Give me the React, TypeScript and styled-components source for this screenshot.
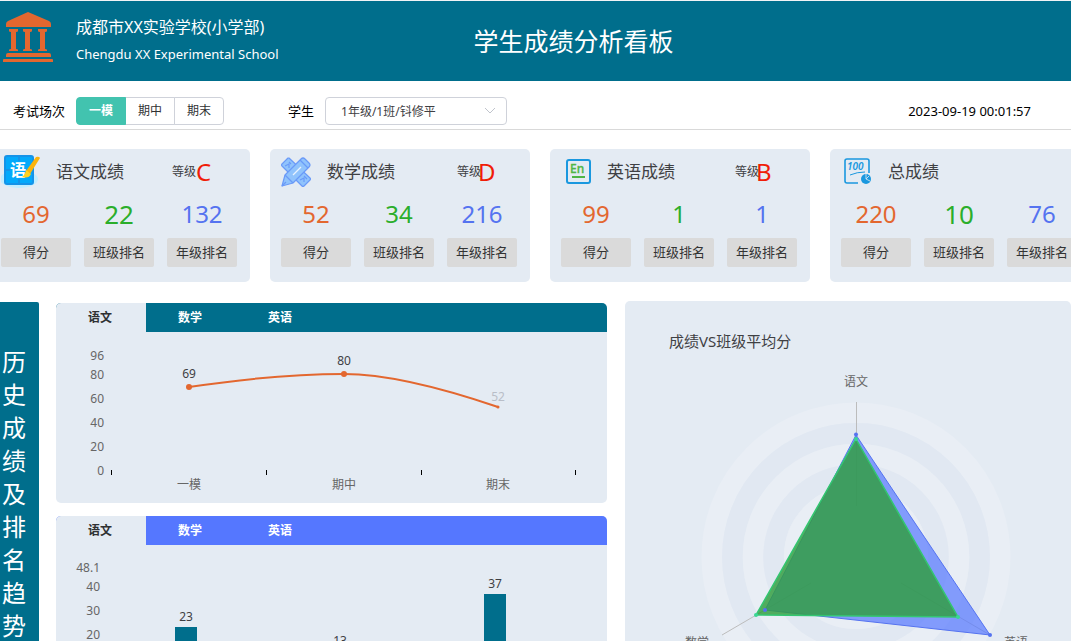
import React, { useState } from 'react';
import styled, { createGlobalStyle, css } from 'styled-components';

const colors = {
  teal: '#006e8c',
  violet: '#5577ff',
  panel: '#e4ebf3',
  orange: '#e3672f',
  green: '#2bae2b',
  blue: '#5573f0',
  red: '#f01d08',
  text: '#3f4043',
  muted: '#666666',
};

const fontStack = '"Noto Sans", "Noto Sans CJK SC", sans-serif';

const GlobalStyle = createGlobalStyle`
  * { box-sizing: border-box; }
  body { margin: 0; background: #fff; font-family: ${fontStack}; color: #000; overflow: hidden; }
  button, select { font-family: inherit; }
  h1, h2, p { margin: 0; font-weight: 400; }
  svg { display: block; }
  svg text { font-family: ${fontStack}; }
`;

const Page = styled.div`
  height: 100vh;
  overflow: hidden;
`;

const Header = styled.header`
  display: flex;
  align-items: center;
  height: 81px;
  border-top: 1px solid #f1f3f6;
  background: ${colors.teal};
  color: #fff;
`;

const LogoBox = styled.div`
  flex: 0 0 76px;
  padding: 0 0 8px 3px;
`;

const HeaderBody = styled.div`
  flex: 1;
  display: grid;
  grid-template-columns: 1fr auto 1fr;
  align-items: center;
`;

const School = styled.div`
  font-size: 16px;
  line-height: 27px;
  white-space: nowrap;
`;

const SchoolEnglish = styled.div`
  font-size: 13px;
  line-height: 27px;
  white-space: nowrap;
`;

const PageTitle = styled.h1`
  font-size: 25px;
  line-height: 36px;
`;

const FilterBar = styled.div`
  display: flex;
  align-items: flex-start;
  height: 49px;
  padding: 16px 40px 0 13px;
  border-bottom: 1px solid #d9d9d9;
  font-size: 13px;
  line-height: 28px;
`;

const FieldLabel = styled.label`
  margin-right: 11px;
`;

const ExamGroup = styled.div`
  display: flex;
  align-items: center;
`;

const Segments = styled.div`
  display: flex;
  margin-right: 64px;
`;

const Segment = styled.button<{ $active: boolean }>`
  width: 50px;
  height: 28px;
  margin-right: -1px;
  padding: 0;
  border: 1px solid #cfd2da;
  background: #fff;
  color: #303133;
  font-size: 12px;
  line-height: 26px;
  &:first-child { border-radius: 4px 0 0 4px; }
  &:last-child { border-radius: 0 4px 4px 0; margin-right: 0; }
  ${(p) => p.$active && css`
    background: #42c3af;
    border-color: #42c3af;
    color: #fff;
    font-weight: 700;
    position: relative;
  `}
`;

const SelectBox = styled.div`
  display: grid;
  align-items: center;
  width: 182px;
  > * { grid-area: 1 / 1; }
  svg { justify-self: end; margin-right: 10px; pointer-events: none; }
`;

const StudentSelect = styled.select`
  appearance: none;
  width: 100%;
  height: 28px;
  padding: 0 28px 0 15px;
  border: 1px solid #cfd2da;
  border-radius: 4px;
  background: #fff;
  color: #3f4043;
  font-size: 12px;
`;

const Clock = styled.time`
  margin-left: auto;
  font-size: 13px;
`;

const Cards = styled.section`
  display: grid;
  grid-template-columns: repeat(4, minmax(260px, 1fr));
  gap: 20px;
  margin: 19px -19px 19px -10px;
`;

const Card = styled.article`
  height: 133px;
  padding: 3px 11px 0;
  border-radius: 5px;
  background: ${colors.panel};
  color: ${colors.text};
`;

const CardHead = styled.div<{ $iconWidth: number; $titleWidth: number }>`
  display: grid;
  grid-template-columns: ${(p) => p.$iconWidth}px ${(p) => p.$titleWidth}px auto;
  align-items: center;
  justify-content: start;
  height: 40px;
`;

const CardTitle = styled.h2`
  font-size: 17px;
  line-height: 24px;
`;

const Grade = styled.div`
  display: flex;
  align-items: center;
  font-size: 12px;
  line-height: 24px;
`;

const GradeLetter = styled.span<{ $overlap?: boolean }>`
  margin-left: ${(p) => (p.$overlap ? -3 : 0)}px;
  color: ${colors.red};
  font-size: 24px;
`;

const Stats = styled.dl`
  display: grid;
  grid-template-columns: repeat(3, 70px);
  column-gap: 13px;
  margin: 0;
`;

const Stat = styled.div`
  display: flex;
  flex-direction: column-reverse;
  text-align: center;
`;

const StatValue = styled.dd<{ $color: string; $large?: boolean }>`
  height: 46px;
  margin: 0;
  color: ${(p) => p.$color};
  font-size: ${(p) => (p.$large ? 26 : 24)}px;
  line-height: 44px;
`;

const StatLabel = styled.dt`
  height: 29px;
  border-radius: 2px;
  background: #dadada;
  color: #333;
  font-size: 13px;
  line-height: 29px;
`;

const Main = styled.main`
  display: grid;
  grid-template-columns: 39px minmax(0, 568fr) minmax(0, 464fr);
`;

const SideTitle = styled.aside`
  min-height: 414px;
  margin-top: 1px;
  padding: 43px 13px 0 2px;
  border-radius: 0 2px 0 0;
  background: ${colors.teal};
  color: #fff;
  font-size: 24px;
  line-height: 33px;
  word-break: break-all;
`;

const Trends = styled.div`
  display: flex;
  flex-direction: column;
  gap: 13px;
  margin: 2px 0 0 17px;
`;

const Panel = styled.section`
  border-radius: 5px;
  background: ${colors.panel};
  overflow: hidden;
`;

const TabBar = styled.div<{ $color: string }>`
  display: flex;
  height: 29px;
  background: ${(p) => p.$color};
`;

const Tab = styled.button<{ $active: boolean }>`
  width: 90px;
  padding: 1px 2px 0 0;
  border: 0;
  background: ${(p) => (p.$active ? colors.panel : 'transparent')};
  color: ${(p) => (p.$active ? '#303133' : '#fff')};
  font-size: 12px;
  font-weight: 700;
  line-height: 28px;
`;

const RadarPanel = styled(Panel)`
  margin-left: 18px;
  min-height: 414px;
  padding-top: 28px;
`;

const RadarTitle = styled.h2`
  padding-left: 44px;
  color: ${colors.text};
  font-size: 15px;
  line-height: 24px;
`;

const SchoolLogo = () => (
  <svg width="50" height="50" viewBox="0 0 50 50" fill="#e3672f" aria-hidden="true">
    <path d="M25 0L46 9q2 1 2 3v3H3v-3q0-2 2-3z" />
    {[6, 20, 35].map((x) => (
      <path key={x} transform={`translate(${x} 17)`} d="M0 0h9v2q0 1-2 1v17q2 0 2 1v1H0v-1q0-1 2-1V3Q0 3 0 2z" />
    ))}
    <path d="M5 41h41q2 0 2 2v2H3v-2q0-2 2-2zM1 47h48q1 0 1 1v2H0v-2q0-1 1-1z" />
  </svg>
);

const ChineseIcon = () => (
  <svg width="40" height="36" viewBox="0 0 40 36" aria-hidden="true">
    <ellipse cx="18" cy="25" rx="19" ry="9" fill="#c2edff" />
    <rect x="4" y="2" width="28" height="28" rx="2" fill="#03a9fb" stroke="#1593e8" strokeWidth="2" />
    <path d="M18 2v5M18 25v5M4 16h5M28 16h4" stroke="#1593e8" strokeWidth="2" />
    <text x="9" y="22" fontSize="16" fontWeight="700" fill="#fff">语</text>
    <path d="M35 3q3-1 4 1L29 20l-4-3z" fill="#fbb40b" />
    <path d="M25 16l5 4q-2 5-9 3 3-2 4-7z" fill="#ffd21f" />
  </svg>
);

const MathIcon = () => (
  <svg width="30" height="30" viewBox="0 0 30 30" fill="#90c3fc" stroke="#6a9af8" strokeWidth="1.2" strokeLinejoin="round" aria-hidden="true">
    <path d="M8 1l21 20q1 1 0 2l-6 6q-1 1-2 0L1 9q-1-1 0-2l6-6z" />
    <path d="M4 9l4-2 0 4M8 5l2 2M19 23l4-2 0 4M23 19l3 3" fill="none" />
    <path d="M1 29l3-11L20 2q2-2 4 0l4 4q2 2 0 4L12 26z" />
    <path d="M4 18l8 8M19 3l8 8M1 29l4-4" fill="none" />
    <path d="M12 18L20 10" stroke="#e8f3ff" fill="none" />
  </svg>
);

const EnglishIcon = () => (
  <svg width="30" height="30" viewBox="0 0 30 30" aria-hidden="true">
    <rect x="6" y="3" width="23" height="23" rx="2" fill="none" stroke="#1a98df" strokeWidth="2" />
    <text x="9" y="16" fontSize="12" fontWeight="500" fill="#4eb646" stroke="#4eb646" strokeWidth="0.3">En</text>
    <path d="M11 20h13" stroke="#4eb646" strokeWidth="2" />
  </svg>
);

const TotalIcon = () => (
  <svg width="30" height="30" viewBox="0 0 30 30" aria-hidden="true">
    <path d="M17 26H6q-2 0-2-2V4q0-2 2-2h20q2 0 2 2v12" fill="none" stroke="#1a98df" strokeWidth="1.6" />
    <text x="6" y="13" fontSize="10" fontWeight="600" fontStyle="italic" fill="#1a98df">100</text>
    <path d="M9 18q7-3 15-3" fill="none" stroke="#1a98df" />
    <circle cx="25" cy="22" r="5" fill="#1a98df" />
    <path d="M25 17v5l4 2M25 22l3-3" fill="none" stroke="#e4ebf3" strokeWidth="0.8" />
  </svg>
);

interface Subject {
  title: string;
  icon: React.ReactNode;
  iconWidth: number;
  titleWidth: number;
  grade?: string;
  overlap?: boolean;
  large?: boolean;
  values: [number, number, number];
}

const subjects: Subject[] = [
  { title: '语文成绩', icon: <ChineseIcon />, iconWidth: 55, titleWidth: 116, grade: 'C', large: true, values: [69, 22, 132] },
  { title: '数学成绩', icon: <MathIcon />, iconWidth: 46, titleWidth: 130, grade: 'D', overlap: true, values: [52, 34, 216] },
  { title: '英语成绩', icon: <EnglishIcon />, iconWidth: 46, titleWidth: 128, grade: 'B', overlap: true, values: [99, 1, 1] },
  { title: '总成绩', icon: <TotalIcon />, iconWidth: 47, titleWidth: 128, large: true, values: [220, 10, 76] },
];

const SubjectCard = ({ subject }: { subject: Subject }) => (
  <Card>
    <CardHead $iconWidth={subject.iconWidth} $titleWidth={subject.titleWidth}>
      {subject.icon}
      <CardTitle>{subject.title}</CardTitle>
      {subject.grade && (
        <Grade>
          等级<GradeLetter $overlap={subject.overlap}>{subject.grade}</GradeLetter>
        </Grade>
      )}
    </CardHead>
    <Stats>
      <Stat>
        <StatLabel>得分</StatLabel>
        <StatValue $color={colors.orange}>{subject.values[0]}</StatValue>
      </Stat>
      <Stat>
        <StatLabel>班级排名</StatLabel>
        <StatValue $color={colors.green} $large={subject.large}>{subject.values[1]}</StatValue>
      </Stat>
      <Stat>
        <StatLabel>年级排名</StatLabel>
        <StatValue $color={colors.blue}>{subject.values[2]}</StatValue>
      </Stat>
    </Stats>
  </Card>
);

const courses = ['语文', '数学', '英语'];
const exams = ['一模', '期中', '期末'];

const CourseTabs = ({ color }: { color: string }) => {
  const [active, setActive] = useState(0);
  return (
    <TabBar $color={color} role="tablist">
      {courses.map((c, i) => (
        <Tab key={c} role="tab" aria-selected={i === active} $active={i === active} onClick={() => setActive(i)}>
          {c}
        </Tab>
      ))}
    </TabBar>
  );
};

const examX = [133, 288, 442];

const LineChart = () => (
  <svg width="551" height="171" viewBox="0 0 551 171" fontSize="12" role="img" aria-label="历史成绩">
    <g fill={colors.muted} textAnchor="end">
      {[[96, 28], [80, 47], [60, 71], [40, 95], [20, 119], [0, 143]].map(([v, y]) => (
        <text key={v} x="48" y={y}>{v}</text>
      ))}
    </g>
    <path d="M55.5 138v5M210.5 138v5M365.5 138v5M519.5 138v5" stroke="#000" />
    <path d="M133 55C180 48 240 42 288 42C336 42 392 58 442 75" fill="none" stroke={colors.orange} strokeWidth="2" />
    <circle cx="133" cy="55" r="3" fill={colors.orange} />
    <circle cx="288" cy="42" r="3" fill={colors.orange} />
    <circle cx="442" cy="75" r="1.5" fill={colors.orange} />
    <g textAnchor="middle" fill="#3f4043">
      <text x="133" y="46">69</text>
      <text x="288" y="33">80</text>
      <text x="442" y="69" fill="#b9bec8">52</text>
    </g>
    <g textAnchor="middle" fill={colors.muted}>
      {exams.map((e, i) => <text key={e} x={examX[i]} y="157">{e}</text>)}
    </g>
  </svg>
);

const BarChart = () => (
  <svg width="551" height="171" viewBox="0 0 551 171" fontSize="12" role="img" aria-label="历史排名">
    <g fill={colors.muted} textAnchor="end">
      {[[48.1, 27], [40, 46], [30, 70], [20, 94], [10, 118], [0, 142]].map(([v, y]) => (
        <text key={v} x="44" y={y}>{v}</text>
      ))}
    </g>
    {[[130, 23, 82], [284, 13, 106], [439, 37, 49]].map(([x, v, y]) => (
      <g key={x}>
        <rect x={x - 11} y={y} width="22" height={138 - y} fill={colors.teal} />
        <text x={x} y={y - 6} textAnchor="middle" fill="#3f4043">{v}</text>
      </g>
    ))}
    <g textAnchor="middle" fill={colors.muted}>
      {exams.map((e, i) => <text key={e} x={examX[i] - 3} y="157">{e}</text>)}
    </g>
  </svg>
);

const RadarChart = () => (
  <svg width="446" height="360" viewBox="0 0 446 360" fontSize="12" role="img" aria-label="成绩VS班级平均分">
    <g fill="none" strokeWidth="20.6">
      {[144.2, 123.6, 103, 82.4, 61.8].map((r, i) => (
        <circle key={r} cx="231" cy="204" r={r} stroke={i % 2 ? '#e1e8f2' : '#e9eef5'} />
      ))}
    </g>
    <path d="M231.5 153V49M186 230L97 282M276 230L365 282" fill="none" stroke="#bcbcbc" />
    <path d="M231 82L365 282L140 257Z" fill="#5577ff" fillOpacity="0.7" stroke="#5573f0" />
    <path d="M231 86L333 264L131 262Z" fill="#2f9e3d" fillOpacity="0.82" stroke="#33c671" strokeWidth="1.5" />
    <g fill="#5573f0">
      <circle cx="231" cy="81.5" r="2" /><circle cx="365" cy="282" r="2" /><circle cx="140" cy="257" r="2" />
    </g>
    <g fill="#3ad794">
      <circle cx="231" cy="86" r="2" /><circle cx="333" cy="264" r="2" /><circle cx="131" cy="262" r="2" />
    </g>
    <g fill={colors.muted} textAnchor="middle">
      <text x="231" y="33">语文</text>
      <text x="72" y="294">数学</text>
      <text x="391" y="294">英语</text>
    </g>
  </svg>
);

export default function App() {
  const [exam, setExam] = useState(0);
  return (
    <Page>
      <GlobalStyle />
      <Header>
        <LogoBox><SchoolLogo /></LogoBox>
        <HeaderBody>
          <div>
            <School>成都市XX实验学校(小学部)</School>
            <SchoolEnglish>Chengdu XX Experimental School</SchoolEnglish>
          </div>
          <PageTitle>学生成绩分析看板</PageTitle>
        </HeaderBody>
      </Header>
      <FilterBar>
        <ExamGroup role="group" aria-labelledby="exam-label">
          <FieldLabel as="span" id="exam-label">考试场次</FieldLabel>
          <Segments>
            {exams.map((e, i) => (
              <Segment key={e} $active={i === exam} aria-pressed={i === exam} onClick={() => setExam(i)}>{e}</Segment>
            ))}
          </Segments>
        </ExamGroup>
        <FieldLabel htmlFor="student">学生</FieldLabel>
        <SelectBox>
          <StudentSelect id="student"><option>1年级/1班/钭修平</option></StudentSelect>
          <svg width="13" height="8" viewBox="0 0 13 8" fill="none" stroke="#c0c4cc" aria-hidden="true">
            <path d="M1 1l5 5 5-5" />
          </svg>
        </SelectBox>
        <Clock dateTime="2023-09-19T00:01:57">2023-09-19 00:01:57</Clock>
      </FilterBar>
      <Cards>
        {subjects.map((s) => <SubjectCard key={s.title} subject={s} />)}
      </Cards>
      <Main>
        <SideTitle>历史成绩及排名趋势</SideTitle>
        <Trends>
          <Panel><CourseTabs color={colors.teal} /><LineChart /></Panel>
          <Panel><CourseTabs color={colors.violet} /><BarChart /></Panel>
        </Trends>
        <RadarPanel>
          <RadarTitle>成绩VS班级平均分</RadarTitle>
          <RadarChart />
        </RadarPanel>
      </Main>
    </Page>
  );
}
